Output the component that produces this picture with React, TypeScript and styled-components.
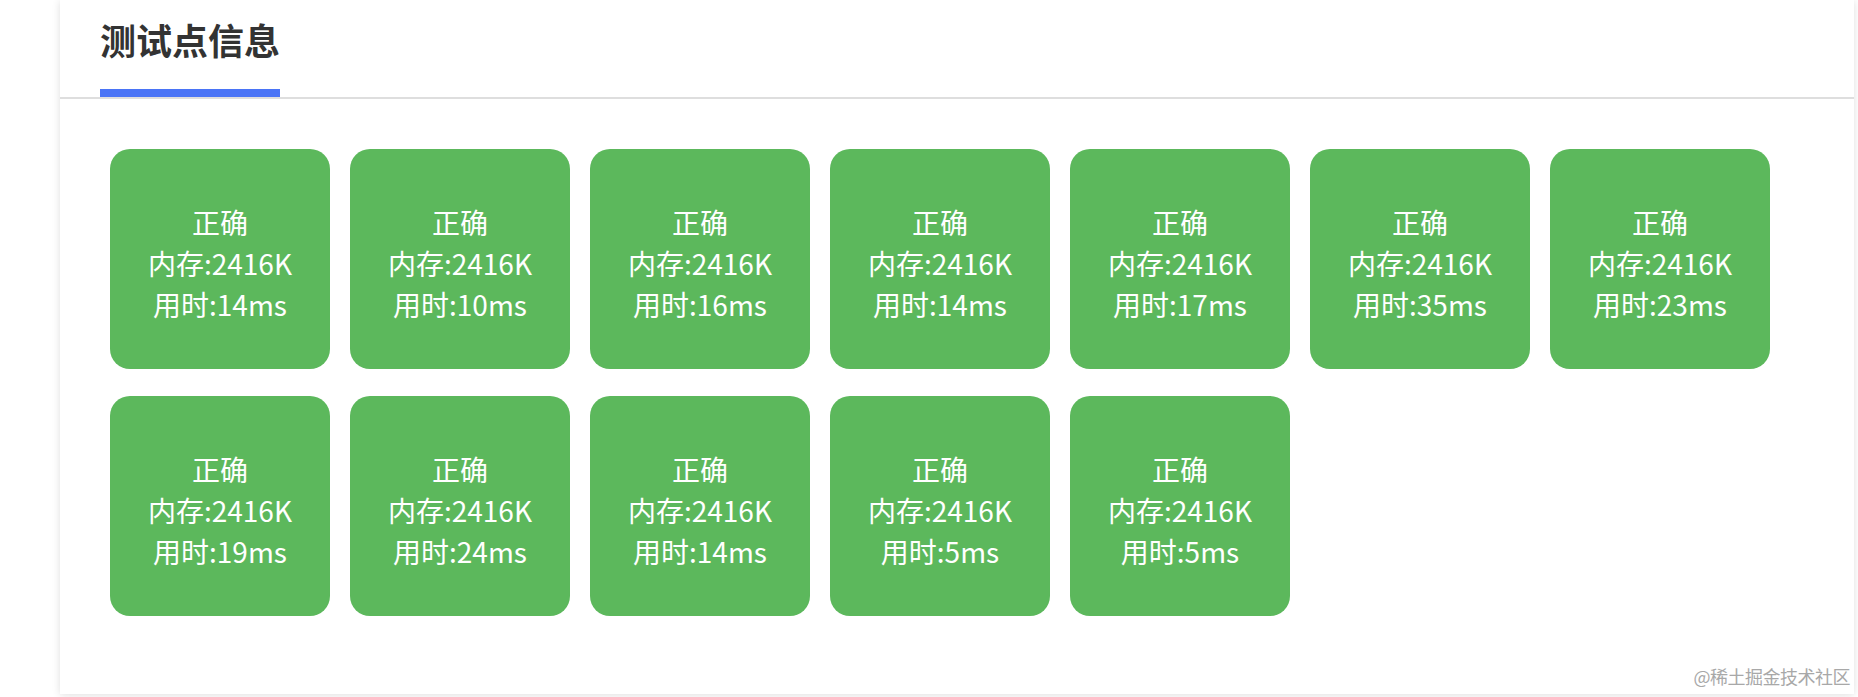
import React from 'react'
import styled, { createGlobalStyle } from 'styled-components'

const GlobalStyle = createGlobalStyle`
	html, body {
		margin: 0;
		padding: 0;
		background: #fff;
		font-family: "Noto Sans CJK SC", "Noto Sans", sans-serif;
	}
`

const Page = styled.div`
	position: relative;
	width: 1858px;
	height: 697px;
	padding: 0 4px 0 60px;
	box-sizing: border-box;
	overflow: hidden;
`

const Panel = styled.section`
	background: #fff;
	height: 694px;
	box-shadow: 0 1px 8px rgba(0, 0, 0, 0.13);
	box-sizing: border-box;
`

const TabBar = styled.div`
	display: flex;
	padding-left: 40px;
	border-bottom: 2px solid #dedede;
`

const Tab = styled.h2`
	margin: 0;
	padding-top: 21px;
	font-size: 36px;
	line-height: 36px;
	font-weight: 700;
	color: #333;
	display: flex;
	flex-direction: column;
	&::after {
		content: '';
		display: block;
		height: 8px;
		margin-top: 32px;
		background: #4a74f6;
	}
`

const Grid = styled.div`
	display: flex;
	flex-wrap: wrap;
	column-gap: 20px;
	row-gap: 27px;
	padding: 50px 50px 0;
	width: 1660px;
	box-sizing: content-box;
`

const Case = styled.div<{ $ok: boolean }>`
	width: 220px;
	height: 220px;
	border-radius: 20px;
	background: ${p => (p.$ok ? '#5cb85c' : '#d9534f')};
	color: #fff;
	display: flex;
	flex-direction: column;
	align-items: center;
	justify-content: center;
	font-size: 28px;
	line-height: 41px;
	padding-top: 8px;
	box-sizing: border-box;
`

const Watermark = styled.div`
	position: absolute;
	right: 8px;
	bottom: 8px;
	font-size: 18px;
	color: #a8a8a8;
	letter-spacing: -0.5px;
`

const cases = [14, 10, 16, 14, 17, 35, 23, 19, 24, 14, 5, 5]

export default function App() {
	return (
		<>
			<GlobalStyle />
			<Page>
				<Panel>
					<TabBar>
						<Tab>测试点信息</Tab>
					</TabBar>
					<Grid>
						{cases.map((t, i) => (
							<Case key={i} $ok>
								<span>正确</span>
								<span>内存:2416K</span>
								<span>用时:{t}ms</span>
							</Case>
						))}
					</Grid>
				</Panel>
				<Watermark>@稀土掘金技术社区</Watermark>
			</Page>
		</>
	)
}
